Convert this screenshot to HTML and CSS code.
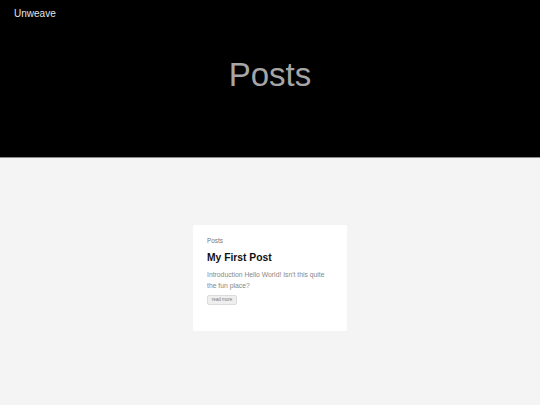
FILE: index.html
```html
<!DOCTYPE html>
<html>
<head>
<meta charset="utf-8">
<title>Posts</title>
<link rel="stylesheet" href="styles.css">
</head>
<body>
<header class="site-header">
  <nav class="nav"><a class="brand" href="#">Unweave</a></nav>
  <h1 class="page-title">Posts</h1>
</header>
<main class="content">
  <article class="card">
    <div class="card-label">Posts</div>
    <h2 class="card-title">My First Post</h2>
    <p class="card-text">Introduction Hello World! Isn't this quite the fun place?</p>
    <button class="btn">read more</button>
  </article>
</main>
</body>
</html>
```
FILE: styles.css
```css
html, body {
  margin: 0;
  padding: 0;
}
body {
  font-family: "Liberation Sans", Arial, sans-serif;
  background: #f4f4f4;
  height: 405px;
}
.site-header {
  background: #000;
  height: 157px;
  border-bottom: 1px solid #8a8a8a;
  box-sizing: content-box;
  display: flex;
  flex-direction: column;
}
.nav {
  padding: 6px 14px 0;
  height: 12px;
  line-height: 12px;
}
.brand {
  color: #e6e6e6;
  font-size: 10px;
  text-decoration: none;
}
.page-title {
  margin: 37px 0 0;
  text-align: center;
  font-weight: normal;
  font-size: 33px;
  line-height: 40px;
  color: #a6a6a6;
}
.content {
  display: flex;
  justify-content: center;
  padding-top: 67px;
}
.card {
  width: 154px;
  height: 106px;
  box-sizing: border-box;
  background: #fff;
  border-radius: 2px;
  padding: 12px 14px 0;
}
.card-label {
  font-size: 6.4px;
  line-height: 8px;
  color: #777;
}
.card-title {
  margin: 6.5px 0 0;
  font-size: 10.3px;
  line-height: 12px;
  font-weight: bold;
  color: #111;
}
.card-text {
  margin: 5.5px 0 0;
  font-size: 6.8px;
  line-height: 11px;
  color: #888;
}
.btn {
  display: block;
  margin-top: 4px;
  height: 10px;
  width: 30px;
  padding: 0;
  font-family: "Liberation Sans", Arial, sans-serif;
  font-size: 4.5px;
  line-height: 8px;
  color: #777;
  background: #efefef;
  border: 1px solid #dcdcdc;
  border-radius: 2px;
}
```
